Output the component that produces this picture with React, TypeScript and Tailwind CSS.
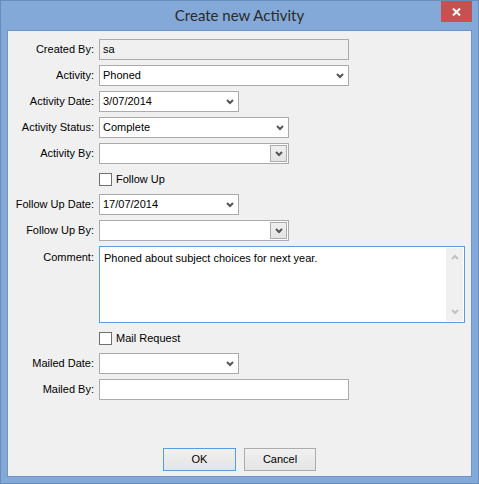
import React from 'react';

const font = { fontFamily: '"Liberation Sans", Arial, sans-serif' };
const titleFont = { fontFamily: 'Lato, "Noto Sans", sans-serif' };

const Chevron: React.FC<{ color?: string; up?: boolean }> = ({ color = '#555555', up }) => (
  <svg width="8" height="6" viewBox="0 0 8 6">
    <polyline
      points={up ? '1,5 4,2 7,5' : '1,1 4,4 7,1'}
      fill="none"
      stroke={color}
      strokeWidth="2"
    />
  </svg>
);

const TextBox: React.FC<{ value?: string; width: string; disabled?: boolean }> = ({ value, width, disabled }) => (
  <div
    className={`${width} h-[21px] border border-[#ababab] flex items-center pl-[3px] text-[11px] text-black ${
      disabled ? 'bg-[#f0f0f0]' : 'bg-white'
    }`}
  >
    {value}
  </div>
);

const Combo: React.FC<{ value?: string; width: string }> = ({ value, width }) => (
  <div className={`${width} h-[21px] border border-[#ababab] bg-white flex items-center pl-[3px] pr-[4px] text-[11px] text-black`}>
    <span className="flex-1">{value}</span>
    <Chevron />
  </div>
);

const EditCombo: React.FC<{ width: string }> = ({ width }) => (
  <div className={`${width} h-[21px] border border-[#ababab] bg-white relative`}>
    <div className="absolute right-[1px] top-[1px] w-[17px] h-[17px] border border-[#acacac] bg-gradient-to-b from-[#f0f0f0] to-[#e3e3e3] flex items-center justify-center">
      <Chevron />
    </div>
  </div>
);

const Check: React.FC<{ label: string }> = ({ label }) => (
  <div className="h-[20px] flex items-center gap-[4px] text-[11px] text-black">
    <div className="w-[13px] h-[13px] border border-[#707070] bg-white" />
    <span>{label}</span>
  </div>
);

const Label: React.FC<{ text?: string; top?: boolean }> = ({ text, top }) => (
  <div
    className={`text-[11px] text-black text-right whitespace-nowrap pr-[1px] ${
      top ? 'pt-[3px]' : 'h-[21px] flex items-center justify-end'
    }`}
  >
    {text}
  </div>
);

export default function App() {
  return (
    <div style={font} className="w-[479px] h-[484px] bg-[#83a9d8] border border-[#6a8cbb] relative flex flex-col">
      <div style={titleFont} className="h-[29px] flex items-center justify-center text-[15px] text-[#2b2b2b] pb-[1px]">
        Create new Activity
      </div>
      <div className="absolute right-[6px] top-0 w-[31px] h-[21px] bg-[#c75050] flex items-center justify-center">
        <svg width="9" height="8" viewBox="0 0 9 8">
          <path d="M1 0.5 L8 7.5 M8 0.5 L1 7.5" stroke="white" strokeWidth="2" />
        </svg>
      </div>
      <div className="flex-1 px-[6px] pb-[6px] flex">
        <div className="flex-1 border border-[#6f93c3] bg-[#f0f0f0] flex flex-col pt-[8px] pb-[5px]">
          <div className="grid grid-cols-[87px_auto] gap-x-[4px] gap-y-[5px] justify-start">
            <Label text="Created By:" />
            <TextBox value="sa" width="w-[250px]" disabled />

            <Label text="Activity:" />
            <Combo value="Phoned" width="w-[250px]" />

            <Label text="Activity Date:" />
            <Combo value="3/07/2014" width="w-[140px]" />

            <Label text="Activity Status:" />
            <Combo value="Complete" width="w-[190px]" />

            <Label text="Activity By:" />
            <EditCombo width="w-[190px]" />

            <div />
            <Check label="Follow Up" />

            <Label text="Follow Up Date:" />
            <Combo value="17/07/2014" width="w-[140px]" />

            <Label text="Follow Up By:" />
            <EditCombo width="w-[190px]" />

            <Label text="Comment:" top />
            <div className="w-[366px] h-[77px] border border-[#569de5] bg-white flex">
              <div className="flex-1 pl-[4px] pt-[3px] text-[11px] text-black">
                Phoned about subject choices for next year.
              </div>
              <div className="w-[17px] my-[1px] mr-[1px] bg-[#f0f0f0] flex flex-col items-center justify-between py-[6px]">
                <Chevron color="#c2c2c2" up />
                <Chevron color="#c2c2c2" />
              </div>
            </div>

            <div />
            <Check label="Mail Request" />

            <Label text="Mailed Date:" />
            <Combo width="w-[140px]" />

            <Label text="Mailed By:" />
            <TextBox width="w-[250px]" />
          </div>
          <div className="flex-1" />
          <div className="flex justify-center gap-[8px] text-[11px] text-black">
            <button className="w-[73px] h-[23px] border border-[#569de5] bg-gradient-to-b from-[#f0f0f0] to-[#e5e5e5]">
              OK
            </button>
            <button className="w-[72px] h-[23px] border border-[#acacac] bg-gradient-to-b from-[#f0f0f0] to-[#e5e5e5]">
              Cancel
            </button>
          </div>
        </div>
      </div>
    </div>
  );
}
